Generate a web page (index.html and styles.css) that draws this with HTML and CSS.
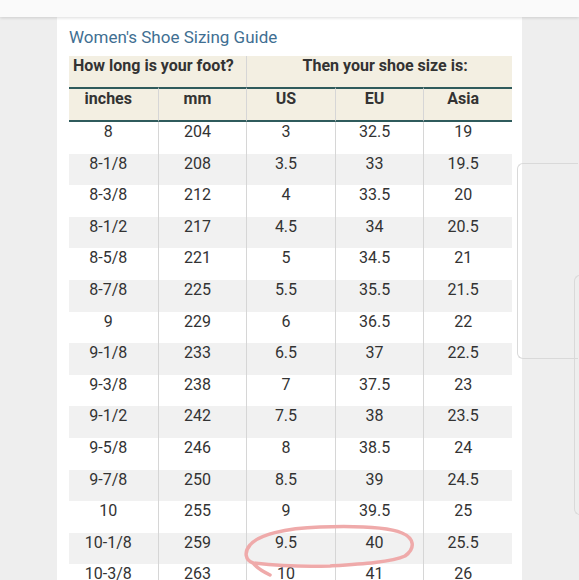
FILE: index.html
```html
<!DOCTYPE html>
<html>
<head>
<meta charset="utf-8">
<link rel="stylesheet" href="styles.css">
</head>
<body>
<div class="topbar"></div>
<main class="page">
  <section class="card">
    <h1 class="title">Women's Shoe Sizing Guide</h1>
    <table class="sizes">
      <colgroup><col><col><col><col><col></colgroup>
      <thead>
        <tr class="group">
          <th colspan="2" class="g1">How long is your foot?</th>
          <th colspan="3" class="g2">Then your shoe size is:</th>
        </tr>
        <tr class="cols">
          <th>inches</th><th>mm</th><th>US</th><th>EU</th><th>Asia</th>
        </tr>
      </thead>
      <tbody>
        <tr><td>8</td><td>204</td><td>3</td><td>32.5</td><td>19</td></tr>
        <tr><td>8-1/8</td><td>208</td><td>3.5</td><td>33</td><td>19.5</td></tr>
        <tr><td>8-3/8</td><td>212</td><td>4</td><td>33.5</td><td>20</td></tr>
        <tr><td>8-1/2</td><td>217</td><td>4.5</td><td>34</td><td>20.5</td></tr>
        <tr><td>8-5/8</td><td>221</td><td>5</td><td>34.5</td><td>21</td></tr>
        <tr><td>8-7/8</td><td>225</td><td>5.5</td><td>35.5</td><td>21.5</td></tr>
        <tr><td>9</td><td>229</td><td>6</td><td>36.5</td><td>22</td></tr>
        <tr><td>9-1/8</td><td>233</td><td>6.5</td><td>37</td><td>22.5</td></tr>
        <tr><td>9-3/8</td><td>238</td><td>7</td><td>37.5</td><td>23</td></tr>
        <tr><td>9-1/2</td><td>242</td><td>7.5</td><td>38</td><td>23.5</td></tr>
        <tr><td>9-5/8</td><td>246</td><td>8</td><td>38.5</td><td>24</td></tr>
        <tr><td>9-7/8</td><td>250</td><td>8.5</td><td>39</td><td>24.5</td></tr>
        <tr><td>10</td><td>255</td><td>9</td><td>39.5</td><td>25</td></tr>
        <tr><td>10-1/8</td><td>259</td><td>9.5</td><td>40</td><td>25.5</td></tr>
        <tr><td>10-3/8</td><td>263</td><td>10</td><td>41</td><td>26</td></tr>
      </tbody>
    </table>
  </section>
</main>
<div class="ghost ghost-a"></div>
<div class="ghost ghost-b"></div>
<svg class="scribble" width="579" height="580" viewBox="0 0 579 580">
  <path d="M 270 575 C 262 571 256 567 253 563 C 245 560 244 552 250 545 C 258 535 285 528 320 527 C 350 526 385 526 402 533 C 414 538 416 548 405 556 C 392 562 360 564 330 566 C 305 567 280 566 253 563" fill="none" stroke="#efaaaa" stroke-width="3.5" stroke-linecap="round" stroke-linejoin="round"/>
</svg>
</body>
</html>
```
FILE: styles.css
```css
html, body {
  margin: 0;
  padding: 0;
}
body {
  background: #eeeeee;
  font-family: Roboto, "Noto Sans", sans-serif;
  width: 579px;
  height: 580px;
  overflow: hidden;
  position: relative;
}
.topbar {
  height: 17px;
  background: #fafafa;
  box-shadow: 0 1px 3px rgba(0, 0, 0, 0.14);
  position: relative;
  z-index: 2;
}
.page {
  padding-left: 57px;
}
.card {
  width: 453px;
  background: #ffffff;
  padding: 10px 0 40px 12px;
  min-height: 600px;
}
.title {
  margin: 0 0 9px;
  font-size: 17px;
  line-height: 20px;
  font-weight: 400;
  color: #3f6f92;
}
.sizes {
  width: 443px;
  table-layout: fixed;
  border-collapse: separate;
  border-spacing: 0;
  color: #333333;
  font-size: 16px;
  line-height: 20px;
}
.sizes th,
.sizes td {
  padding: 0 10px 11px 0;
  vertical-align: top;
  text-align: center;
  white-space: nowrap;
}
.sizes th + th,
.sizes td + td {
  border-left: 1px solid #d6d6d6;
}
.sizes th {
  background: #f3efe2;
  font-weight: 700;
}
.group th {
  height: 20px;
}
.group .g1 {
  text-align: left;
  padding-left: 4px;
}
.group .g2 {
  padding-left: 11px;
  padding-right: 0;
}
.cols th {
  border-top: 2px solid #2f5b5c;
  border-bottom: 2px solid #2f5b5c;
}
.sizes td {
  padding-bottom: 11.6px;
  font-weight: 400;
}
.sizes tbody tr:nth-child(even) td {
  background: #f1f1f1;
}
.ghost {
  position: absolute;
  border: 1px solid #d9d9d9;
  border-right: none;
  border-radius: 6px 0 0 6px;
}
.ghost-a {
  left: 517px;
  top: 163px;
  width: 60px;
  height: 194px;
}
.ghost-b {
  left: 574px;
  top: 275px;
  width: 10px;
  height: 238px;
}
.scribble {
  position: absolute;
  left: 0;
  top: 0;
  pointer-events: none;
}
```
